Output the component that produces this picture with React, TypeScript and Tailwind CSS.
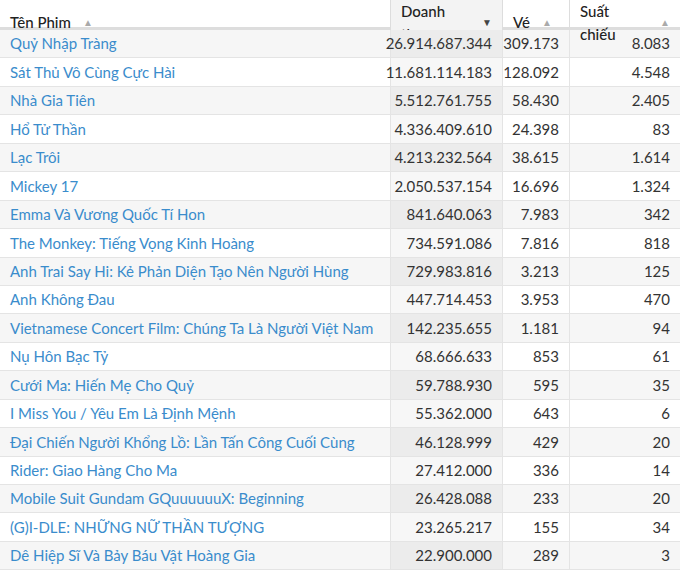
const rows: [string, string, string, string][] = [
  ['Quỷ Nhập Tràng', '26.914.687.344', '309.173', '8.083'],
  ['Sát Thủ Vô Cùng Cực Hài', '11.681.114.183', '128.092', '4.548'],
  ['Nhà Gia Tiên', '5.512.761.755', '58.430', '2.405'],
  ['Hổ Tử Thần', '4.336.409.610', '24.398', '83'],
  ['Lạc Trôi', '4.213.232.564', '38.615', '1.614'],
  ['Mickey 17', '2.050.537.154', '16.696', '1.324'],
  ['Emma Và Vương Quốc Tí Hon', '841.640.063', '7.983', '342'],
  ['The Monkey: Tiếng Vọng Kinh Hoàng', '734.591.086', '7.816', '818'],
  ['Anh Trai Say Hi: Kẻ Phản Diện Tạo Nên Người Hùng', '729.983.816', '3.213', '125'],
  ['Anh Không Đau', '447.714.453', '3.953', '470'],
  ['Vietnamese Concert Film: Chúng Ta Là Người Việt Nam', '142.235.655', '1.181', '94'],
  ['Nụ Hôn Bạc Tỷ', '68.666.633', '853', '61'],
  ['Cưới Ma: Hiến Mẹ Cho Quỷ', '59.788.930', '595', '35'],
  ['I Miss You / Yêu Em Là Định Mệnh', '55.362.000', '643', '6'],
  ['Đại Chiến Người Khổng Lồ: Lần Tấn Công Cuối Cùng', '46.128.999', '429', '20'],
  ['Rider: Giao Hàng Cho Ma', '27.412.000', '336', '14'],
  ['Mobile Suit Gundam GQuuuuuuX: Beginning', '26.428.088', '233', '20'],
  ['(G)I-DLE: NHỮNG NỮ THẦN TƯỢNG', '23.265.217', '155', '34'],
  ['Dê Hiệp Sĩ Và Bảy Báu Vật Hoàng Gia', '22.900.000', '289', '3'],
];

const cols = 'grid grid-cols-[390px_112px_67px_111px]';

function Up() {
  return <span className="ml-3 text-[10px] text-[#aaa]">▲</span>;
}

export default function App() {
  return (
    <div className="w-[680px] h-[570px] overflow-hidden bg-white text-[15px] text-[#333]" style={{ fontFamily: 'Lato, "Noto Sans", sans-serif' }}>
      <div className={`${cols} h-[30px] border-b-[3px] border-[#ddd] font-medium text-[#222]`}>
        <div className="flex items-center px-[10px]">Tên Phim<Up /></div>
        <div className="flex items-center border-l border-[#ddd] bg-[#f3f3f3] px-[10px]">Doanh thu<span className="ml-3 text-[10px] text-[#444]">▼</span></div>
        <div className="flex items-center border-l border-[#ddd] px-[10px]">Vé<Up /></div>
        <div className="flex items-center border-l border-[#ddd] px-[10px]">Suất chiếu<Up /></div>
      </div>
      {rows.map((r, i) => {
        const odd = i % 2 === 0;
        return (
          <div key={i} className={`${cols} h-[28.45px] border-b border-[#e4e4e4] ${odd ? 'bg-[#f6f6f6]' : 'bg-white'}`}>
            <div className="flex items-center px-[10px] text-[#3a8ccc] whitespace-nowrap">{r[0]}</div>
            <div className={`flex items-center justify-end border-l border-[#e4e4e4] px-[10px] ${odd ? 'bg-[#ececec]' : 'bg-[#f7f7f7]'}`}>{r[1]}</div>
            <div className="flex items-center justify-end border-l border-[#e4e4e4] px-[10px]">{r[2]}</div>
            <div className="flex items-center justify-end border-l border-[#e4e4e4] px-[10px]">{r[3]}</div>
          </div>
        );
      })}
    </div>
  );
}
